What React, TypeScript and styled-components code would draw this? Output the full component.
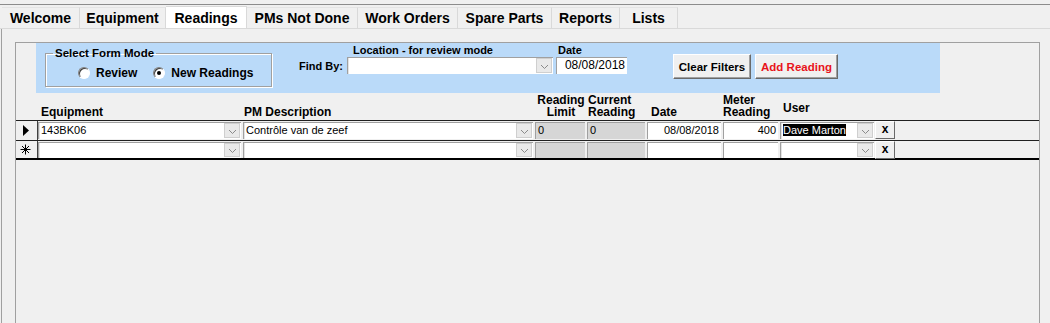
import React from 'react'
import styled, { createGlobalStyle } from 'styled-components'

const GlobalStyle = createGlobalStyle`
  html, body {
    margin: 0;
    padding: 0;
  }
  body {
    background: #f0f0f0;
    overflow: hidden;
    font-family: "Liberation Sans", Arial, sans-serif;
    color: #000;
  }
`

const tabs = [
  { label: 'Welcome', w: 78 },
  { label: 'Equipment', w: 86 },
  { label: 'Readings', w: 81, active: true },
  { label: 'PMs Not Done', w: 111 },
  { label: 'Work Orders', w: 100 },
  { label: 'Spare Parts', w: 94 },
  { label: 'Reports', w: 68 },
  { label: 'Lists', w: 58 },
]

// column slots of the datasheet: x start -> next start
const cols = {
  equipment: 205,
  pm: 292,
  limit: 52,
  current: 60,
  date: 76,
  meter: 57,
  user: 95,
  del: 20,
}

const Chevron = () => (
  <svg width="9" height="6" viewBox="0 0 9 6">
    <polyline points="1,1 4.5,4.5 8,1" fill="none" stroke="#8a8a8a" strokeWidth="1" />
  </svg>
)

const Pointer = () => (
  <svg width="8" height="11" viewBox="0 0 8 11">
    <polygon points="1,0 7,5.5 1,11" fill="#000" />
  </svg>
)

const NewRecord = () => (
  <svg width="11" height="11" viewBox="0 0 11 11">
    <g stroke="#000" strokeWidth="1">
      <line x1="5.5" y1="0.5" x2="5.5" y2="10.5" />
      <line x1="0.5" y1="5.5" x2="10.5" y2="5.5" />
      <line x1="2" y1="2" x2="9" y2="9" />
      <line x1="9" y1="2" x2="2" y2="9" />
    </g>
  </svg>
)

const App = () => {
  return (
    <>
      <GlobalStyle />
      <Window>
        <TopEdge />
        <TabBar>
          {tabs.map((t) => (
            <Tab key={t.label} $w={t.w} $active={!!t.active}>{t.label}</Tab>
          ))}
        </TabBar>
        <Page>
          <FormBox>
            <Band>
              <ModeGroup>
                <legend>Select Form Mode</legend>
                <RadioRow>
                  <RadioItem>
                    <Radio />
                    Review
                  </RadioItem>
                  <RadioItem>
                    <Radio $on />
                    New Readings
                  </RadioItem>
                </RadioRow>
              </ModeGroup>
              <FindBy>Find By:</FindBy>
              <Field>
                <FieldLabel $indent={6}>Location - for review mode</FieldLabel>
                <Combo $w={206} $h={17}>
                  <ComboText />
                  <DropButton><Chevron /></DropButton>
                </Combo>
              </Field>
              <Field $ml={3}>
                <FieldLabel $indent={2}>Date</FieldLabel>
                <TextBox $w={71} $h={17} $right $size={12}>08/08/2018</TextBox>
              </Field>
              <Button $ml={46} $w={78}>Clear Filters</Button>
              <Button $ml={4} $w={83} $red>Add Reading</Button>
            </Band>

            <HeaderRow>
              <Selector as="div" $plain />
              <Head $w={cols.equipment} $pl={3}>Equipment</Head>
              <Head $w={cols.pm} $pl={1}>PM Description</Head>
              <Head $w={cols.limit} $center>Reading<br />Limit</Head>
              <Head $w={cols.current} $pl={1}>Current<br />Reading</Head>
              <Head $w={cols.date} $pl={4}>Date</Head>
              <Head $w={cols.meter}>Meter<br />Reading</Head>
              <Head $w={cols.user} $pl={3} $pb={6}>User</Head>
            </HeaderRow>

            <Row>
              <Selector><Pointer /></Selector>
              <Slot $w={cols.equipment}>
                <Combo $w={203} $h={17}>
                  <ComboText>143BK06</ComboText>
                  <DropButton><Chevron /></DropButton>
                </Combo>
              </Slot>
              <Slot $w={cols.pm}>
                <Combo $w={290} $h={17}>
                  <ComboText>Contrôle van de zeef</ComboText>
                  <DropButton><Chevron /></DropButton>
                </Combo>
              </Slot>
              <Slot $w={cols.limit}>
                <TextBox $w={50} $h={17} $grey>0</TextBox>
              </Slot>
              <Slot $w={cols.current}>
                <TextBox $w={58} $h={17} $grey>0</TextBox>
              </Slot>
              <Slot $w={cols.date}>
                <TextBox $w={74} $h={17} $right>08/08/2018</TextBox>
              </Slot>
              <Slot $w={cols.meter}>
                <TextBox $w={55} $h={17} $right>400</TextBox>
              </Slot>
              <Slot $w={cols.user}>
                <Combo $w={94} $h={17}>
                  <ComboText><Selected>Dave Marton</Selected></ComboText>
                  <DropButton><Chevron /></DropButton>
                </Combo>
              </Slot>
              <Slot $w={cols.del}>
                <DeleteButton>x</DeleteButton>
              </Slot>
            </Row>

            <Row $last>
              <Selector><NewRecord /></Selector>
              <Slot $w={cols.equipment}>
                <Combo $w={203} $h={16}>
                  <ComboText />
                  <DropButton><Chevron /></DropButton>
                </Combo>
              </Slot>
              <Slot $w={cols.pm}>
                <Combo $w={290} $h={16}>
                  <ComboText />
                  <DropButton><Chevron /></DropButton>
                </Combo>
              </Slot>
              <Slot $w={cols.limit}>
                <TextBox $w={50} $h={16} $grey />
              </Slot>
              <Slot $w={cols.current}>
                <TextBox $w={58} $h={16} $grey />
              </Slot>
              <Slot $w={cols.date}>
                <TextBox $w={74} $h={16} />
              </Slot>
              <Slot $w={cols.meter}>
                <TextBox $w={55} $h={16} />
              </Slot>
              <Slot $w={cols.user}>
                <Combo $w={94} $h={16}>
                  <ComboText />
                  <DropButton><Chevron /></DropButton>
                </Combo>
              </Slot>
              <Slot $w={cols.del}>
                <DeleteButton>x</DeleteButton>
              </Slot>
            </Row>
          </FormBox>
        </Page>
      </Window>
    </>
  )
}

export default App

const Window = styled.div`
  width: 1050px;
  height: 323px;
  overflow: hidden;
  background: #f0f0f0;
  display: flex;
  flex-direction: column;
`

const TopEdge = styled.div`
  height: 4px;
  flex: none;
  border-bottom: 1px solid #8c8c8c;
`

const TabBar = styled.div`
  display: flex;
  align-items: flex-end;
  flex: none;
  height: 23px;
  padding-left: 2px;
  border-bottom: 1px solid #d9d9d9;
`

const Tab = styled.div<{ $w: number; $active: boolean }>`
  width: ${({ $w }) => $w}px;
  height: ${({ $active }) => ($active ? 22 : 21)}px;
  box-sizing: border-box;
  display: flex;
  align-items: center;
  justify-content: center;
  font-size: 14px;
  font-weight: bold;
  color: #000;
  background: ${({ $active }) => ($active ? '#ffffff' : '#f0f0f0')};
  border-top: 1px solid ${({ $active }) => ($active ? '#d9d9d9' : '#e4e4e4')};
  border-right: 1px solid #d9d9d9;
  white-space: nowrap;
`

const Page = styled.div`
  flex: 1;
  margin-left: 1px;
  border-left: 1px solid #a0a0a0;
  padding: 13px 0 0 13px;
`

const FormBox = styled.div`
  width: 1025px;
  height: 320px;
  box-sizing: border-box;
  border: 1px solid #a0a0a0;
  display: flex;
  flex-direction: column;
`

const Band = styled.div`
  margin-left: 20px;
  width: 904px;
  height: 50px;
  flex: none;
  box-sizing: border-box;
  background: #badaf9;
  display: flex;
  align-items: flex-start;
  padding-left: 9px;
`

const ModeGroup = styled.fieldset`
  margin: 3px 0 0 0;
  width: 227px;
  height: 41px;
  box-sizing: border-box;
  padding: 0;
  border: 1px solid #a0a0a0;
  box-shadow: 1px 1px 0 #ffffff, inset 1px 1px 0 #ffffff;
  legend {
    margin-left: 7px;
    padding: 0 2px;
    font-size: 11.5px;
    font-weight: bold;
    line-height: 14px;
  }
`

const RadioRow = styled.div`
  display: flex;
  align-items: center;
  gap: 16px;
  margin: 6px 0 0 32px;
`

const RadioItem = styled.label`
  display: flex;
  align-items: center;
  gap: 6px;
  font-size: 12px;
  font-weight: bold;
`

const Radio = styled.span<{ $on?: boolean }>`
  width: 12px;
  height: 12px;
  box-sizing: border-box;
  border-radius: 50%;
  background: #fff;
  border: 1px solid;
  border-color: #808080 #ffffff #ffffff #808080;
  box-shadow: inset 1px 1px 0 #404040;
  position: relative;
  &::after {
    content: '';
    display: ${({ $on }) => ($on ? 'block' : 'none')};
    position: absolute;
    left: 3px;
    top: 3px;
    width: 4px;
    height: 4px;
    border-radius: 50%;
    background: #000;
  }
`

const FindBy = styled.div`
  width: 71px;
  margin-top: 16px;
  padding-right: 4px;
  text-align: right;
  font-size: 11px;
  font-weight: bold;
  line-height: 14px;
`

const Field = styled.div<{ $ml?: number }>`
  display: flex;
  flex-direction: column;
  margin-left: ${({ $ml }) => $ml ?? 0}px;
  margin-top: 1px;
`

const FieldLabel = styled.div<{ $indent: number }>`
  padding-left: ${({ $indent }) => $indent}px;
  font-size: 11px;
  font-weight: bold;
  line-height: 13px;
`

const Combo = styled.div<{ $w: number; $h: number }>`
  width: ${({ $w }) => $w}px;
  height: ${({ $h }) => $h}px;
  box-sizing: border-box;
  display: flex;
  background: #fff;
  border-top: 1px solid #a0a0a0;
  border-left: 1px solid #a0a0a0;
  box-shadow: inset 1px 0 0 #e3e3e3;
`

const ComboText = styled.div`
  flex: 1;
  padding-left: 2px;
  font-size: 11px;
  line-height: 15px;
  white-space: nowrap;
  overflow: hidden;
`

const DropButton = styled.div`
  width: 16px;
  margin: 0 1px 1px 0;
  box-sizing: border-box;
  background: #e9e9e9;
  border: 1px solid #cfcfcf;
  display: flex;
  align-items: center;
  justify-content: center;
  padding-top: 2px;
`

const TextBox = styled.div<{ $w: number; $h: number; $right?: boolean; $grey?: boolean; $size?: number }>`
  width: ${({ $w }) => $w}px;
  height: ${({ $h }) => $h}px;
  box-sizing: border-box;
  background: ${({ $grey }) => ($grey ? '#d6d6d6' : '#ffffff')};
  border-top: 1px solid #a0a0a0;
  border-left: 1px solid #a0a0a0;
  padding: 0 2px;
  text-align: ${({ $right }) => ($right ? 'right' : 'left')};
  font-size: ${({ $size }) => $size ?? 11}px;
  line-height: 15px;
  white-space: nowrap;
  overflow: hidden;
`

const Button = styled.div<{ $ml: number; $w: number; $red?: boolean }>`
  margin: 11px 0 0 ${({ $ml }) => $ml}px;
  width: ${({ $w }) => $w}px;
  height: 25px;
  box-sizing: border-box;
  display: flex;
  align-items: center;
  justify-content: center;
  background: #f0f0f0;
  border: 1px solid;
  border-color: #ffffff #696969 #696969 #ffffff;
  box-shadow: inset -1px -1px 0 #a0a0a0;
  font-size: 11.5px;
  font-weight: bold;
  color: ${({ $red }) => ($red ? '#e8141b' : '#000')};
  white-space: nowrap;
`

const HeaderRow = styled.div`
  display: flex;
  align-items: flex-end;
  height: 27px;
  flex: none;
`

const Head = styled.div<{ $w: number; $pl?: number; $pb?: number; $center?: boolean }>`
  width: ${({ $w }) => $w}px;
  box-sizing: border-box;
  padding-left: ${({ $pl }) => $pl ?? 0}px;
  padding-bottom: ${({ $pb }) => $pb ?? 2}px;
  text-align: ${({ $center }) => ($center ? 'center' : 'left')};
  font-size: 12px;
  font-weight: bold;
  line-height: 12px;
  white-space: nowrap;
`

const Row = styled.div<{ $last?: boolean }>`
  display: flex;
  height: 20px;
  flex: none;
  box-sizing: border-box;
  border-top: 1px solid #202020;
  border-bottom: ${({ $last }) => ($last ? '2px solid #000' : 'none')};
`

const Selector = styled.div<{ $plain?: boolean }>`
  width: 22px;
  box-sizing: border-box;
  border-right: ${({ $plain }) => ($plain ? 'none' : '1px solid #404040')};
  display: flex;
  align-items: center;
  justify-content: center;
  padding-right: 2px;
`

const Slot = styled.div<{ $w: number }>`
  width: ${({ $w }) => $w}px;
  padding-top: 1px;
  display: flex;
`

const Selected = styled.span`
  background: #000;
  color: #fff;
`

const DeleteButton = styled.div`
  width: 20px;
  height: 18px;
  box-sizing: border-box;
  margin-top: -1px;
  display: flex;
  align-items: center;
  justify-content: center;
  background: #f0f0f0;
  border: 1px solid;
  border-color: #ffffff #696969 #696969 #ffffff;
  font-size: 12px;
  font-weight: bold;
  line-height: 12px;
  padding-bottom: 2px;
`
